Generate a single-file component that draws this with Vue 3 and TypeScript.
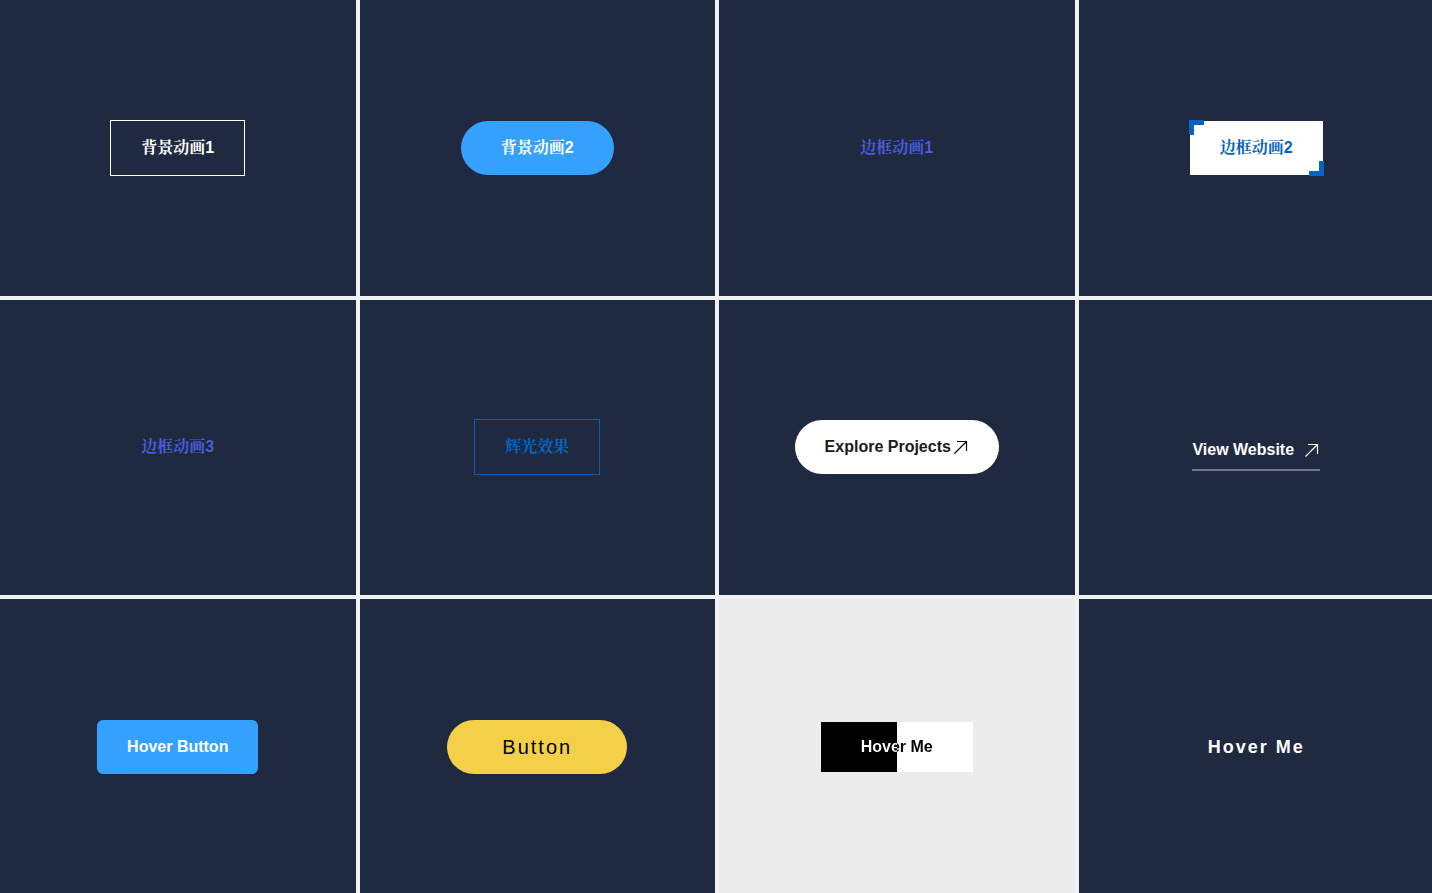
<script setup lang="ts">
interface Demo {
  kind: string
  label: string
  arrow?: boolean
}

const demos: Demo[] = [
  { kind: 'outline', label: '背景动画1' },
  { kind: 'pill', label: '背景动画2' },
  { kind: 'ghost', label: '边框动画1' },
  { kind: 'corners', label: '边框动画2' },
  { kind: 'ghost', label: '边框动画3' },
  { kind: 'glow', label: '辉光效果' },
  { kind: 'explore', label: 'Explore Projects', arrow: true },
  { kind: 'underline', label: 'View Website', arrow: true },
  { kind: 'rounded', label: 'Hover Button' },
  { kind: 'yellow', label: 'Button' },
  { kind: 'split', label: 'Hover Me' },
  { kind: 'spaced', label: 'Hover Me' },
]
</script>

<template>
  <main class="page">
    <div class="grid">
      <section v-for="(demo, i) in demos" :key="i" class="cell" :class="{ light: demo.kind === 'split' }">
        <button type="button" class="btn" :class="demo.kind">
          <span class="label">{{ demo.label }}</span>
          <svg v-if="demo.arrow" class="arrow" viewBox="0 0 16 16" aria-hidden="true">
            <path d="M1.5 14.5 13.5 2.5M4 2.5h9.5V12" />
          </svg>
        </button>
      </section>
    </div>
  </main>
</template>

<style>
body {
  margin: 0;
  background: #f0f1f4;
}
</style>

<style scoped>
.page {
  height: 100vh;
  overflow: hidden;
}

.grid {
  display: grid;
  grid-template-columns: repeat(4, 1fr);
  grid-template-rows: repeat(3, 1fr);
  gap: 4px;
  width: calc(100% + 2px);
  height: calc(100% + 2px);
}

.cell {
  display: flex;
  align-items: center;
  justify-content: center;
  background: #1f2a40;
}

.cell.light {
  background: #ececec;
}

.btn {
  position: relative;
  display: flex;
  align-items: center;
  padding: 18px 30px;
  border: 0;
  background: transparent;
  color: #fff;
  font-family: "Liberation Sans", "Noto Serif CJK SC", "Songti SC", "Noto Sans CJK SC", sans-serif;
  font-size: 16px;
  font-weight: 700;
  line-height: 18px;
  white-space: nowrap;
  cursor: pointer;
}

.outline {
  border: 1px solid #fff;
}

.pill {
  padding: 18px 40px;
  border-radius: 27px;
  background: #35a1ff;
}

.ghost {
  color: #4a5bdc;
}

.corners {
  background: #fff;
  color: #0563c1;
}

.corners::before,
.corners::after {
  content: "";
  position: absolute;
  width: 10px;
  height: 10px;
  border: 0 solid #0563c1;
}

.corners::before {
  top: -1px;
  left: -1px;
  border-width: 5px 0 0 5px;
}

.corners::after {
  right: -1px;
  bottom: -1px;
  border-width: 0 5px 5px 0;
}

.glow {
  border: 1px solid #0b5cab;
  color: #0563c1;
}

.explore {
  gap: 2px;
  border-radius: 27px;
  background: #fff;
  color: #1a1a1a;
}

.explore .arrow {
  color: #000;
}

.arrow {
  width: 16px;
  height: 16px;
  fill: none;
  stroke: currentColor;
  stroke-width: 1.2;
}

.underline {
  gap: 10px;
  padding: 18px 0 10px;
  border-bottom: 2px solid #6e7687;
}

.rounded {
  border-radius: 6px;
  background: #35a1ff;
}

.yellow {
  justify-content: center;
  min-width: 180px;
  border-radius: 27px;
  background: #f4d048;
  color: #000;
  font-size: 20px;
  font-weight: 400;
  letter-spacing: 2px;
}

.split {
  padding: 16px 40px;
  background:
    linear-gradient(90deg, #fff 50%, #000 50%) text,
    linear-gradient(90deg, #000 50%, #fff 50%) border-box;
  color: transparent;
}

.spaced {
  font-size: 18px;
  letter-spacing: 2px;
}
</style>
